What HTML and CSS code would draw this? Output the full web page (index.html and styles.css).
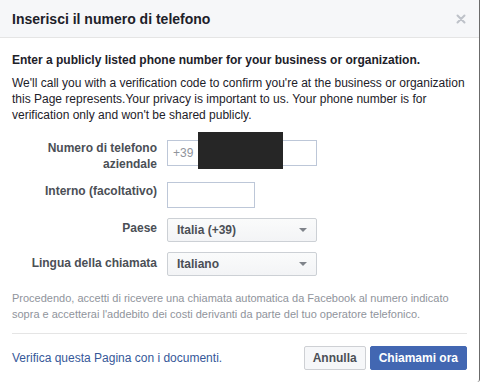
FILE: index.html
```html
<!DOCTYPE html>
<html lang="it">
<head>
<meta charset="utf-8">
<title>Inserisci il numero di telefono</title>
<link rel="stylesheet" href="styles.css">
</head>
<body>
<div class="dialog">
  <div class="header">
    <h1 class="title">Inserisci il numero di telefono</h1>
    <svg class="close" width="10" height="10" viewBox="0 0 10 10" aria-label="Chiudi"><path d="M1.5 1.5 L8.5 8.5 M8.5 1.5 L1.5 8.5" stroke="#bec2c9" stroke-width="2" stroke-linecap="round"/></svg>
  </div>
  <div class="body">
    <p class="intro">Enter a publicly listed phone number for your business or organization.</p>
    <p class="text">We'll call you with a verification code to confirm you're at the business or organization this Page represents.Your privacy is important to us. Your phone number is for verification only and won't be shared publicly.</p>
    <div class="form">
      <label class="label">Numero di telefono aziendale</label>
      <div class="field">
        <div class="input input-phone"><span class="prefix">+39</span></div>
        <div class="redact"></div>
      </div>
      <label class="label label-ext">Interno (facoltativo)</label>
      <div class="field"><div class="input input-ext"></div></div>
      <label class="label label-sel">Paese</label>
      <div class="field"><div class="select"><span>Italia (+39)</span><span class="arrow"></span></div></div>
      <label class="label label-sel2">Lingua della chiamata</label>
      <div class="field"><div class="select"><span>Italiano</span><span class="arrow"></span></div></div>
    </div>
    <p class="disclaimer">Procedendo, accetti di ricevere una chiamata automatica da Facebook al numero indicato<br>sopra e accetterai l'addebito dei costi derivanti da parte del tuo operatore telefonico.</p>
    <div class="footer">
      <a class="link" href="#">Verifica questa Pagina con i documenti.</a>
      <div class="actions">
        <button class="btn btn-cancel">Annulla</button>
        <button class="btn btn-primary">Chiamami ora</button>
      </div>
    </div>
  </div>
</div>
</body>
</html>
```
FILE: styles.css
```css
html, body {
  margin: 0;
  padding: 0;
  background: #fff;
}
body {
  font-family: "Liberation Sans", Arial, Helvetica, sans-serif;
  font-size: 12px;
  line-height: 16px;
  color: #1d2129;
}
.dialog {
  width: 480px;
  height: 382px;
  box-sizing: border-box;
  border-right: 1px solid #6b6b6b;
  border-bottom-right-radius: 3px;
  background: #fff;
}
.header {
  height: 37px;
  border-bottom: 1px solid #e5e5e5;
  background: #f6f7f9;
  display: flex;
  align-items: center;
  justify-content: space-between;
  padding: 0 13px 0 12px;
}
.title {
  margin: 0;
  font-size: 14px;
  font-weight: bold;
  color: #1d2129;
}
.close {
  display: block;
  margin-top: 1px;
}
.body {
  padding: 14px 12px 0 12px;
}
.intro {
  margin: 0;
  font-weight: bold;
}
.text {
  margin: 7px 0 0 0;
}
.form {
  margin-top: 17px;
  display: grid;
  grid-template-columns: 145px 1fr;
  column-gap: 10px;
  row-gap: 10px;
}
.label {
  text-align: right;
  font-weight: bold;
  color: #4b4f56;
}
.label-ext { padding-top: 1px; }
.label-sel { padding-top: 2px; }
.label-sel2 { padding-top: 3px; }
.field {
  position: relative;
}
.input {
  box-sizing: border-box;
  height: 26px;
  border: 1px solid #bdc7d8;
  background: #fff;
  display: flex;
  align-items: center;
  padding: 0 5px;
}
.input-phone { width: 150px; }
.input-ext { width: 88px; }
.prefix {
  color: #90949c;
}
.redact {
  position: absolute;
  left: 31px;
  top: -8px;
  width: 85px;
  height: 37px;
  background: #262626;
}
.select {
  box-sizing: border-box;
  width: 150px;
  height: 24px;
  border: 1px solid #ccd0d5;
  border-radius: 2px;
  background: linear-gradient(#fafbfb, #f3f4f6);
  display: flex;
  align-items: center;
  justify-content: space-between;
  padding: 0 9px 0 9px;
  font-weight: bold;
  color: #4b4f56;
}
.arrow {
  width: 0;
  height: 0;
  border-left: 4px solid transparent;
  border-right: 4px solid transparent;
  border-top: 4px solid #7f838a;
}
.disclaimer {
  margin: 14px 0 0 0;
  font-size: 11px;
  line-height: 16px;
  color: #90949c;
  white-space: nowrap;
}
.footer {
  margin-top: 11px;
  border-top: 1px solid #e5e5e5;
  padding-top: 12px;
  display: flex;
  align-items: center;
  justify-content: space-between;
}
.link {
  color: #365899;
  text-decoration: none;
}
.actions {
  display: flex;
  gap: 4px;
}
.btn {
  box-sizing: border-box;
  height: 24px;
  padding: 0 8px;
  border-radius: 2px;
  font-family: "Liberation Sans", Arial, Helvetica, sans-serif;
  font-size: 12px;
  font-weight: bold;
  line-height: 22px;
}
.btn-cancel {
  background: #f6f7f9;
  border: 1px solid #ced0d4;
  color: #4b4f56;
}
.btn-primary {
  background: #4267b2;
  border: 1px solid #4267b2;
  color: #fff;
}
```
